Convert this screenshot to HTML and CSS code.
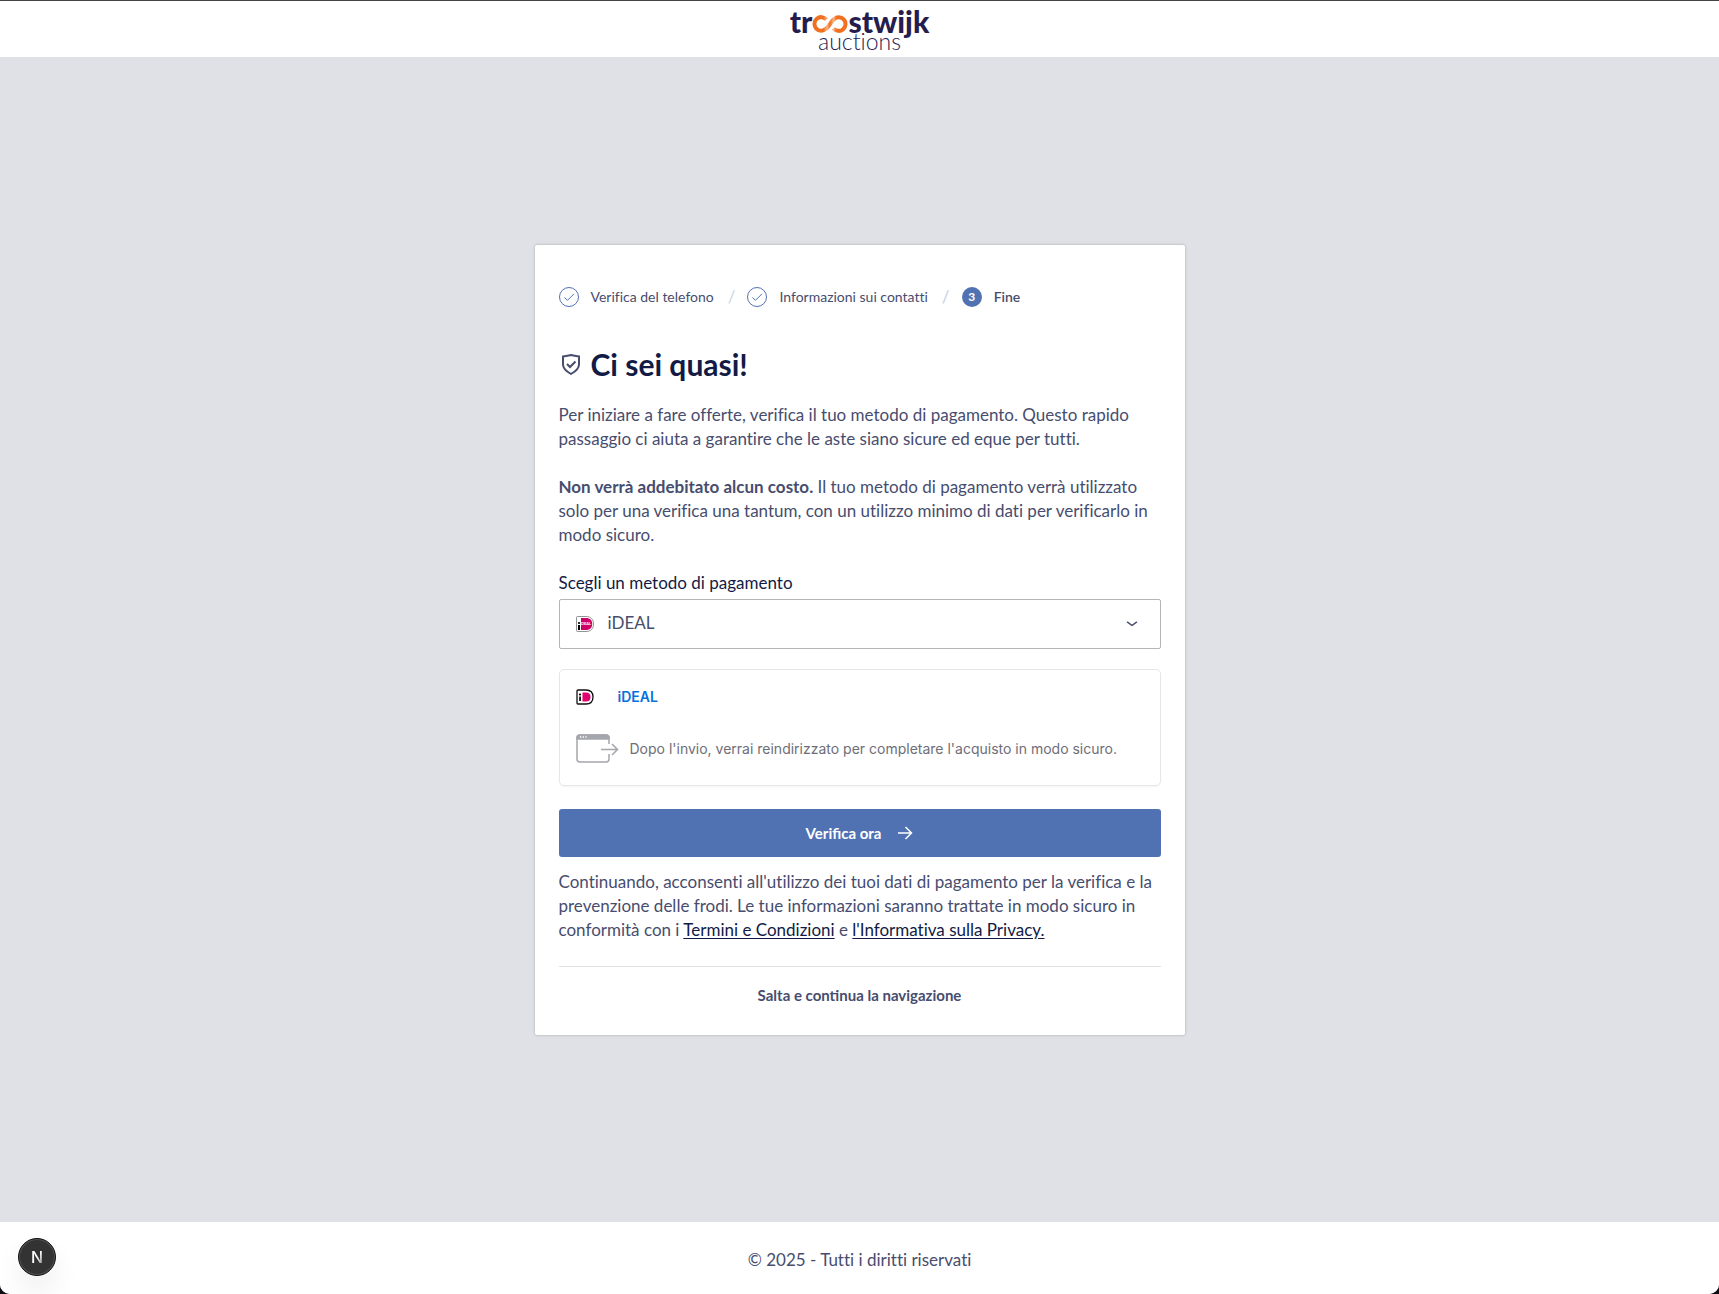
FILE: index.html
```
<!DOCTYPE html>
<html lang="it">
<head>
<meta charset="UTF-8">
<meta name="viewport" content="width=device-width, initial-scale=1.0">
<title>Troostwijk Auctions - Verifica</title>
<link rel="stylesheet" href="styles.css">
</head>
<body>

<div class="app">
    <header class="header">
        <a href="#" class="logo" aria-label="Troostwijk Auctions">
            <span class="logo-top">
                <span>tr</span>
                <svg class="logo-loop" viewBox="0 0 36 18" width="36" height="18" fill="none">
                    <defs>
                        <linearGradient id="loopGradient" x1="0" y1="0" x2="36" y2="0" gradientUnits="userSpaceOnUse">
                            <stop offset="0" stop-color="#f07020"/>
                            <stop offset=".32" stop-color="#f07020"/>
                            <stop offset=".42" stop-color="#f8b48a"/>
                            <stop offset=".5" stop-color="#f07020"/>
                            <stop offset=".6" stop-color="#f8b48a"/>
                            <stop offset=".68" stop-color="#f07020"/>
                            <stop offset="1" stop-color="#f07020"/>
                        </linearGradient>
                    </defs>
                    <path d="M14.500 4.600A6.800 6.800 0 1 0 14 13.800C16.500 12 19.500 6 22 4.200A6.800 6.800 0 1 1 21.500 13.400" stroke="url(#loopGradient)" stroke-width="4"/>
                </svg>
                <span>stwijk</span>
            </span>
            <span class="logo-bottom">auctions</span>
        </a>
    </header>

    <main class="main">
        <section class="card">
            <ol class="steps">
                <li class="step">
                    <svg viewBox="0 0 20 20" width="20" height="20" fill="none" stroke="#5071b2">
                        <circle cx="10" cy="10" r="9.500"/>
                        <path d="M5.500 10.500 8.500 13.300 15 6.800"/>
                    </svg>
                    <span>Verifica del telefono</span>
                </li>
                <li class="step">
                    <svg viewBox="0 0 20 20" width="20" height="20" fill="none" stroke="#5071b2">
                        <circle cx="10" cy="10" r="9.500"/>
                        <path d="M5.500 10.500 8.500 13.300 15 6.800"/>
                    </svg>
                    <span>Informazioni sui contatti</span>
                </li>
                <li class="step step-active">
                    <span class="step-number">3</span>
                    <span>Fine</span>
                </li>
            </ol>

            <h1 class="title">
                <svg viewBox="0 0 24 24" width="24" height="24" fill="none" stroke="#474d6e" stroke-width="2">
                    <path d="M4 4.500C7 4.300 9.500 3.600 12 3C14.500 3.600 17 4.300 20 4.500V12.500C20 17 16.500 19.500 12 22C7.500 19.500 4 17 4 12.500Z"/>
                    <path d="M8 12 11 15 16.500 9.500"/>
                </svg>
                <span>Ci sei quasi!</span>
            </h1>

            <p class="text">Per iniziare a fare offerte, verifica il tuo metodo di pagamento. Questo rapido passaggio ci aiuta a garantire che le aste siano sicure ed eque per tutti.</p>
            <p class="text"><strong>Non verrà addebitato alcun costo.</strong> Il tuo metodo di pagamento verrà utilizzato solo per una verifica una tantum, con un utilizzo minimo di dati per verificarlo in modo sicuro.</p>

            <form class="payment">
                <label class="label" for="method">Scegli un metodo di pagamento</label>
                <div class="select-box">
                    <svg class="select-logo" viewBox="0 0 18 16" width="18" height="16">
                        <path d="M1.500.5H10C15 .5 17.500 3.500 17.500 8S15 15.500 10 15.500H1.500Q.5 15.500.5 14.500V1.500Q.5.5 1.500.5Z" fill="#fff" stroke="#777" stroke-width=".8"/>
                        <path d="M5 2H10C14 2 16.200 4.200 16.200 8S14 14 10 14H5Z" fill="#cc0066"/>
                        <circle cx="3" cy="7" r="1.100"/>
                        <path d="M2 9H4V14H2Z"/>
                        <text class="tiny" x="5" y="9">DEAL</text>
                    </svg>
                    <select class="select" id="method">
                        <option>iDEAL</option>
                    </select>
                    <svg class="select-arrow" viewBox="0 0 12 8" width="12" height="8" fill="none" stroke="#474d6e" stroke-width="1.500" stroke-linecap="round" stroke-linejoin="round">
                        <path d="M1.500 2.200 6 5.500 10.500 2.200"/>
                    </svg>
                </div>

                <div class="method">
                    <div class="method-name">
                        <svg viewBox="0 0 18 16" width="18" height="16">
                            <path d="M2 1H10C14.500 1 17 3.500 17 8S14.500 15 10 15H2Q1 15 1 14V2Q1 1 2 1Z" fill="#fff" stroke="#111" stroke-width="1.300"/>
                            <path d="M6.500 3.500H10C13 3.500 14.500 5 14.500 8S13 12.500 10 12.500H6.500Z" fill="#e50071"/>
                            <circle cx="4" cy="5.500" r="1.100"/>
                            <path d="M3.200 7.500H4.900V12H3.200Z"/>
                        </svg>
                        <span>iDEAL</span>
                    </div>
                    <div class="method-info">
                        <svg viewBox="0 0 44 30" width="44" height="30" fill="none" stroke="#a5a6ac" stroke-width="1.500">
                            <path d="M33 10V4Q33 1 30 1H4Q1 1 1 4V25Q1 28 4 28H30Q33 28 33 25V20"/>
                            <path d="M1 5V4Q1 1 4 1H30Q33 1 33 4V5Z" fill="#a5a6ac"/>
                            <path d="M25 15.500H41M36 10 41.500 15.500 36 21"/>
                            <path d="M4 3H5.300M6.700 3H8M9.400 3H10.700" stroke="#fff"/>
                        </svg>
                        <span>Dopo l'invio, verrai reindirizzato per completare l'acquisto in modo sicuro.</span>
                    </div>
                </div>

                <button type="submit" class="button-primary">
                    <span>Verifica ora</span>
                    <svg viewBox="0 0 16 16" width="16" height="16" fill="none" stroke="#fff" stroke-width="1.500">
                        <path d="M1 8H14M8.500 2 14.500 8 8.500 14"/>
                    </svg>
                </button>
            </form>

            <p class="text consent">Continuando, acconsenti all'utilizzo dei tuoi dati di pagamento per la verifica e la prevenzione delle frodi. Le tue informazioni saranno trattate in modo sicuro in conformità con i <a href="#">Termini e Condizioni</a> e <a href="#">l'Informativa sulla Privacy.</a></p>

            <div class="skip">
                <button type="button" class="button-skip">Salta e continua la navigazione</button>
            </div>
        </section>
    </main>

    <footer class="footer">© 2025 - Tutti i diritti riservati</footer>
</div>

<button type="button" class="dev-button" aria-label="Next.js">
    <svg viewBox="0 0 38 38" width="38" height="38">
        <defs>
            <linearGradient id="nGradient" x1="0" y1="0" x2="1" y2="1">
                <stop offset=".5" stop-color="#fff"/>
                <stop offset="1" stop-color="#777"/>
            </linearGradient>
        </defs>
        <text class="dev-letter" x="19" y="25" text-anchor="middle" fill="url(#nGradient)">N</text>
    </svg>
</button>

</body>
</html>
```
FILE: styles.css
```
* {
    box-sizing: border-box;
}

body {
    margin: 0;
    background: #0d0d12;
    font-family: Lato, "Open Sans", sans-serif;
    font-size: 17px;
    font-variant-ligatures: none;
    line-height: 24px;
    color: #474d6e;
}

button, select {
    font-family: inherit;
}

.app {
    min-height: 100vh;
    display: flex;
    flex-direction: column;
    background: #e0e1e6;
    border-top: 1px solid #444446;
    border-radius: 0 0 10px 10px;
    overflow: hidden;
}

/* header */
.header {
    height: 56px;
    display: flex;
    justify-content: center;
    align-items: flex-start;
    background: #fff;
}

.logo {
    display: flex;
    flex-direction: column;
    align-items: center;
    color: #261d4f;
    text-decoration: none;
}

.logo-top {
    display: flex;
    align-items: center;
    height: 31px;
    padding-top: 8px;
    font-size: 30px;
    font-weight: 900;
    line-height: 24px;
}

.logo-loop {
    margin-top: 6px;
}

.logo-bottom {
    font-size: 23px;
    font-weight: 300;
    line-height: 18px;
}

/* card */
.main {
    flex: 1;
    display: flex;
    justify-content: center;
    align-items: center;
    padding: 24px;
}

.card {
    width: 100%;
    max-width: 650px;
    padding: 42px 24px 24px;
    background: #fff;
    border-radius: 2px;
    box-shadow: 0 0 3px rgba(0, 0, 0, .25);
}

.steps {
    display: flex;
    margin: 0;
    padding: 0;
    list-style: none;
    font-size: 14px;
    line-height: 20px;
}

.step {
    display: flex;
    align-items: center;
    gap: 12px;
}

.step + .step::before {
    content: "/";
    margin-left: 14px;
    font-size: 17px;
    color: #cbd4e8;
}

.step-active {
    font-weight: 600;
}

.step-number {
    width: 20px;
    height: 20px;
    border-radius: 50%;
    background: #5071b2;
    color: #fff;
    font-size: 12px;
    font-weight: 700;
    text-align: center;
}

.title {
    display: flex;
    align-items: center;
    gap: 8px;
    margin: 36px 0 18px;
    font-size: 30px;
    font-weight: 700;
    line-height: 42px;
    color: #111b45;
}

.text {
    margin: 0 0 24px;
}

/* payment form */
.label {
    display: block;
    margin-bottom: 4px;
    color: #111b45;
}

.select-box {
    position: relative;
    margin-bottom: 20px;
}

.select {
    width: 100%;
    height: 50px;
    padding: 0 48px 2px;
    appearance: none;
    background: #fff;
    border: 1px solid #b5b5b9;
    border-radius: 2px;
    color: #474d6e;
    font-size: 17px;
}

.select-logo {
    position: absolute;
    left: 17px;
    top: 17px;
}

.select-arrow {
    position: absolute;
    right: 23px;
    top: 21px;
}

.tiny {
    font-size: 4px;
    font-weight: 700;
    fill: #fff;
}

.method {
    margin-bottom: 23px;
    padding: 17px 16px 21px;
    border: 1px solid #e6e6e6;
    border-radius: 5px;
    box-shadow: 0 1px 2px rgba(0, 0, 0, .04);
    font-family: Inter, sans-serif;
    font-size: 14px;
    line-height: 20px;
}

.method-name {
    display: flex;
    align-items: center;
    gap: 24px;
    color: #0570de;
    font-weight: 600;
}

.method-info {
    display: flex;
    align-items: center;
    gap: 10px;
    margin-top: 27px;
    color: #6d6e78;
}

.button-primary {
    display: flex;
    justify-content: center;
    align-items: center;
    gap: 16px;
    width: 100%;
    height: 48px;
    background: #5071b2;
    border: 0;
    border-radius: 3px;
    color: #fff;
    font-size: 15px;
    font-weight: 700;
    cursor: pointer;
}

.consent {
    margin-top: 13px;
}

.consent a {
    color: #111b45;
    text-underline-offset: 2px;
}

.skip {
    display: flex;
    justify-content: center;
    padding-top: 12px;
    border-top: 1px solid #dfe0e4;
}

.button-skip {
    padding: 4px 16px;
    background: none;
    border: 0;
    color: #474d6e;
    font-size: 15px;
    font-weight: 700;
    line-height: 24px;
    cursor: pointer;
}

.footer {
    padding: 26px 24px 22px;
    background: #fff;
    text-align: center;
}

.dev-button {
    position: fixed;
    left: 18px;
    bottom: 18px;
    width: 38px;
    height: 38px;
    padding: 0;
    background: #333;
    border: 1px solid #111;
    border-radius: 50%;
    box-shadow: inset 0 0 0 1px #555, 0 16px 32px -8px rgba(0, 0, 0, .2);
}

.dev-button svg {
    display: block;
    margin: -1px;
}

.dev-letter {
    font-family: Inter, sans-serif;
    font-size: 16px;
    font-weight: 500;
}
```
